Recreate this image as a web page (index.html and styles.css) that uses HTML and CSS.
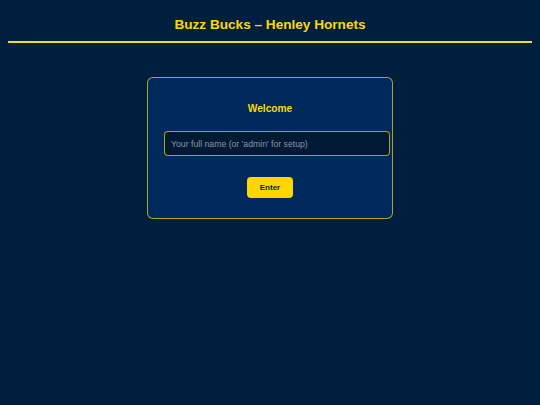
FILE: index.html
```html
<!DOCTYPE html>
<html lang="en">
<head>
<meta charset="utf-8">
<title>Buzz Bucks – Henley Hornets</title>
<link rel="stylesheet" href="styles.css">
</head>
<body>
<header class="site-header">
  <h1 class="site-title">Buzz Bucks – Henley Hornets</h1>
</header>
<main class="main">
  <section class="card">
    <h2 class="card-title">Welcome</h2>
    <input class="name-input" type="text" placeholder="Your full name (or 'admin' for setup)">
    <div class="actions">
      <button class="btn" type="button">Enter</button>
    </div>
  </section>
</main>
</body>
</html>
```
FILE: styles.css
```css
html, body {
  background: #001f3f;
}
body {
  margin: 8px;
  font-family: "Liberation Sans", Arial, sans-serif;
  color: #ffd700;
}
.site-header {
  border-bottom: 2px solid #f2dc2a;
  padding: 9px 0 8px;
  text-align: center;
}
.site-title {
  margin: 0;
  font-size: 13.6px;
  line-height: 16px;
  font-weight: bold;
  color: #ffd700;
}
.main {
  display: flex;
  justify-content: center;
  padding-top: 34px;
}
.card {
  width: 212px;
  padding: 16px;
  background: #002a5c;
  border: 1px solid rgba(255, 215, 0, 0.7);
  border-radius: 6px;
  display: flex;
  flex-direction: column;
}
.card-title {
  margin: 8px 0 15px;
  text-align: center;
  font-size: 10.2px;
  line-height: 14px;
  font-weight: bold;
  color: #ffd700;
}
.name-input {
  box-sizing: content-box;
  width: 100%;
  height: 11px;
  padding: 6px;
  margin: 0;
  border: 1px solid rgba(255, 215, 0, 0.7);
  border-radius: 4px;
  background: #001a35;
  color: #ffffff;
  font-family: "Liberation Sans", Arial, sans-serif;
  font-size: 8.7px;
  outline: none;
}
.name-input::placeholder {
  color: #8a93a3;
}
.actions {
  display: flex;
  justify-content: center;
  margin-top: 21px;
  margin-bottom: 4px;
}
.btn {
  width: 46px;
  height: 21px;
  padding: 0;
  border: none;
  border-radius: 4px;
  background: #ffd700;
  color: #001f3f;
  font-family: "Liberation Sans", Arial, sans-serif;
  font-size: 8px;
  font-weight: bold;
  cursor: pointer;
}
```
